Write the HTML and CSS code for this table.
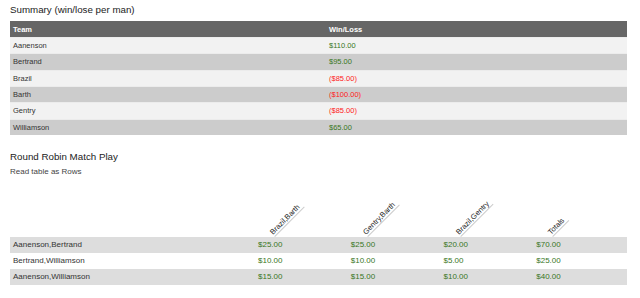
FILE: index.html
```html
<!DOCTYPE html>
<html>
<head>
<meta charset="utf-8">
<link rel="stylesheet" href="styles.css">
</head>
<body>
<div class="page">
  <h2 class="title">Summary (win/lose per man)</h2>
  <table class="summary">
    <thead>
      <tr><th class="c-team">Team</th><th>Win/Loss</th></tr>
    </thead>
    <tbody>
      <tr><td>Aanenson</td><td class="pos">$110.00</td></tr>
      <tr><td>Bertrand</td><td class="pos">$95.00</td></tr>
      <tr><td>Brazil</td><td class="neg">($85.00)</td></tr>
      <tr><td>Barth</td><td class="neg">($100.00)</td></tr>
      <tr><td>Gentry</td><td class="neg">($85.00)</td></tr>
      <tr><td>Williamson</td><td class="pos">$65.00</td></tr>
    </tbody>
  </table>

  <h2 class="title title-2">Round Robin Match Play</h2>
  <p class="note">Read table as Rows</p>
  <table class="robin">
    <thead>
      <tr>
        <th class="c-pair"></th>
        <th class="rot"><div><span>Brazil,Barth</span></div></th>
        <th class="rot"><div><span>Gentry,Barth</span></div></th>
        <th class="rot"><div><span>Brazil,Gentry</span></div></th>
        <th class="rot"><div><span>Totals</span></div></th>
      </tr>
    </thead>
    <tbody>
      <tr><td>Aanenson,Bertrand</td><td class="pos">$25.00</td><td class="pos">$25.00</td><td class="pos">$20.00</td><td class="pos">$70.00</td></tr>
      <tr><td>Bertrand,Williamson</td><td class="pos">$10.00</td><td class="pos">$10.00</td><td class="pos">$5.00</td><td class="pos">$25.00</td></tr>
      <tr><td>Aanenson,Williamson</td><td class="pos">$15.00</td><td class="pos">$15.00</td><td class="pos">$10.00</td><td class="pos">$40.00</td></tr>
    </tbody>
  </table>
</div>
</body>
</html>
```

FILE: styles.css
```css
html, body {
  margin: 0;
  padding: 0;
  background: #ffffff;
}

.page {
  padding: 4px 13px 0 10px;
  font-family: "Liberation Sans", Arial, sans-serif;
  color: #222;
}

.title {
  margin: 0;
  font-size: 9.75px;
  line-height: 12px;
  font-weight: normal;
  color: #222;
}

.title-2 {
  margin-top: 16px;
}

.note {
  margin: 4px 0 0 0;
  font-size: 8px;
  line-height: 10px;
  color: #444;
}

table {
  border-collapse: collapse;
  width: 617px;
}

.summary {
  margin-top: 5px;
  font-size: 7.5px;
}

.summary th {
  background: #666666;
  color: #ffffff;
  font-weight: bold;
  text-align: left;
  height: 16px;
  padding: 0 3px;
}

.summary th.c-team {
  width: 310px;
}

.summary td {
  height: 15.33px;
  padding: 0 3px;
  border-top: 1px solid #ececec;
  color: #333;
}

.summary tbody tr:nth-child(odd) td {
  background: #f2f2f2;
}

.summary tbody tr:nth-child(even) td {
  background: #cccccc;
}

.pos {
  color: #38761d !important;
}

.neg {
  color: #ff1a1a !important;
}

.robin {
  font-size: 8px;
  table-layout: fixed;
}

.robin th {
  height: 60px;
  padding: 0;
  vertical-align: bottom;
  text-align: left;
  white-space: nowrap;
  font-weight: normal;
}

.robin th.c-pair {
  width: 246px;
}

.robin th.rot {
  width: 92.75px;
}

.robin th.rot > div {
  width: max-content;
  transform-origin: 0 100%;
  transform: translateX(19px) rotate(-45deg);
}

.robin th.rot span {
  display: inline-block;
  font-size: 7.5px;
  line-height: 9px;
  color: #222;
  padding: 0 3px 0 0;
  border-bottom: 1px solid #cccccc;
}

.robin td {
  height: 16px;
  padding: 0 2px;
  color: #333;
}

.robin td:first-child {
  padding-left: 3px;
}

.robin tbody tr:nth-child(odd) td {
  background: #dddddd;
}

.robin tbody tr:nth-child(even) td {
  background: #ffffff;
}
```
